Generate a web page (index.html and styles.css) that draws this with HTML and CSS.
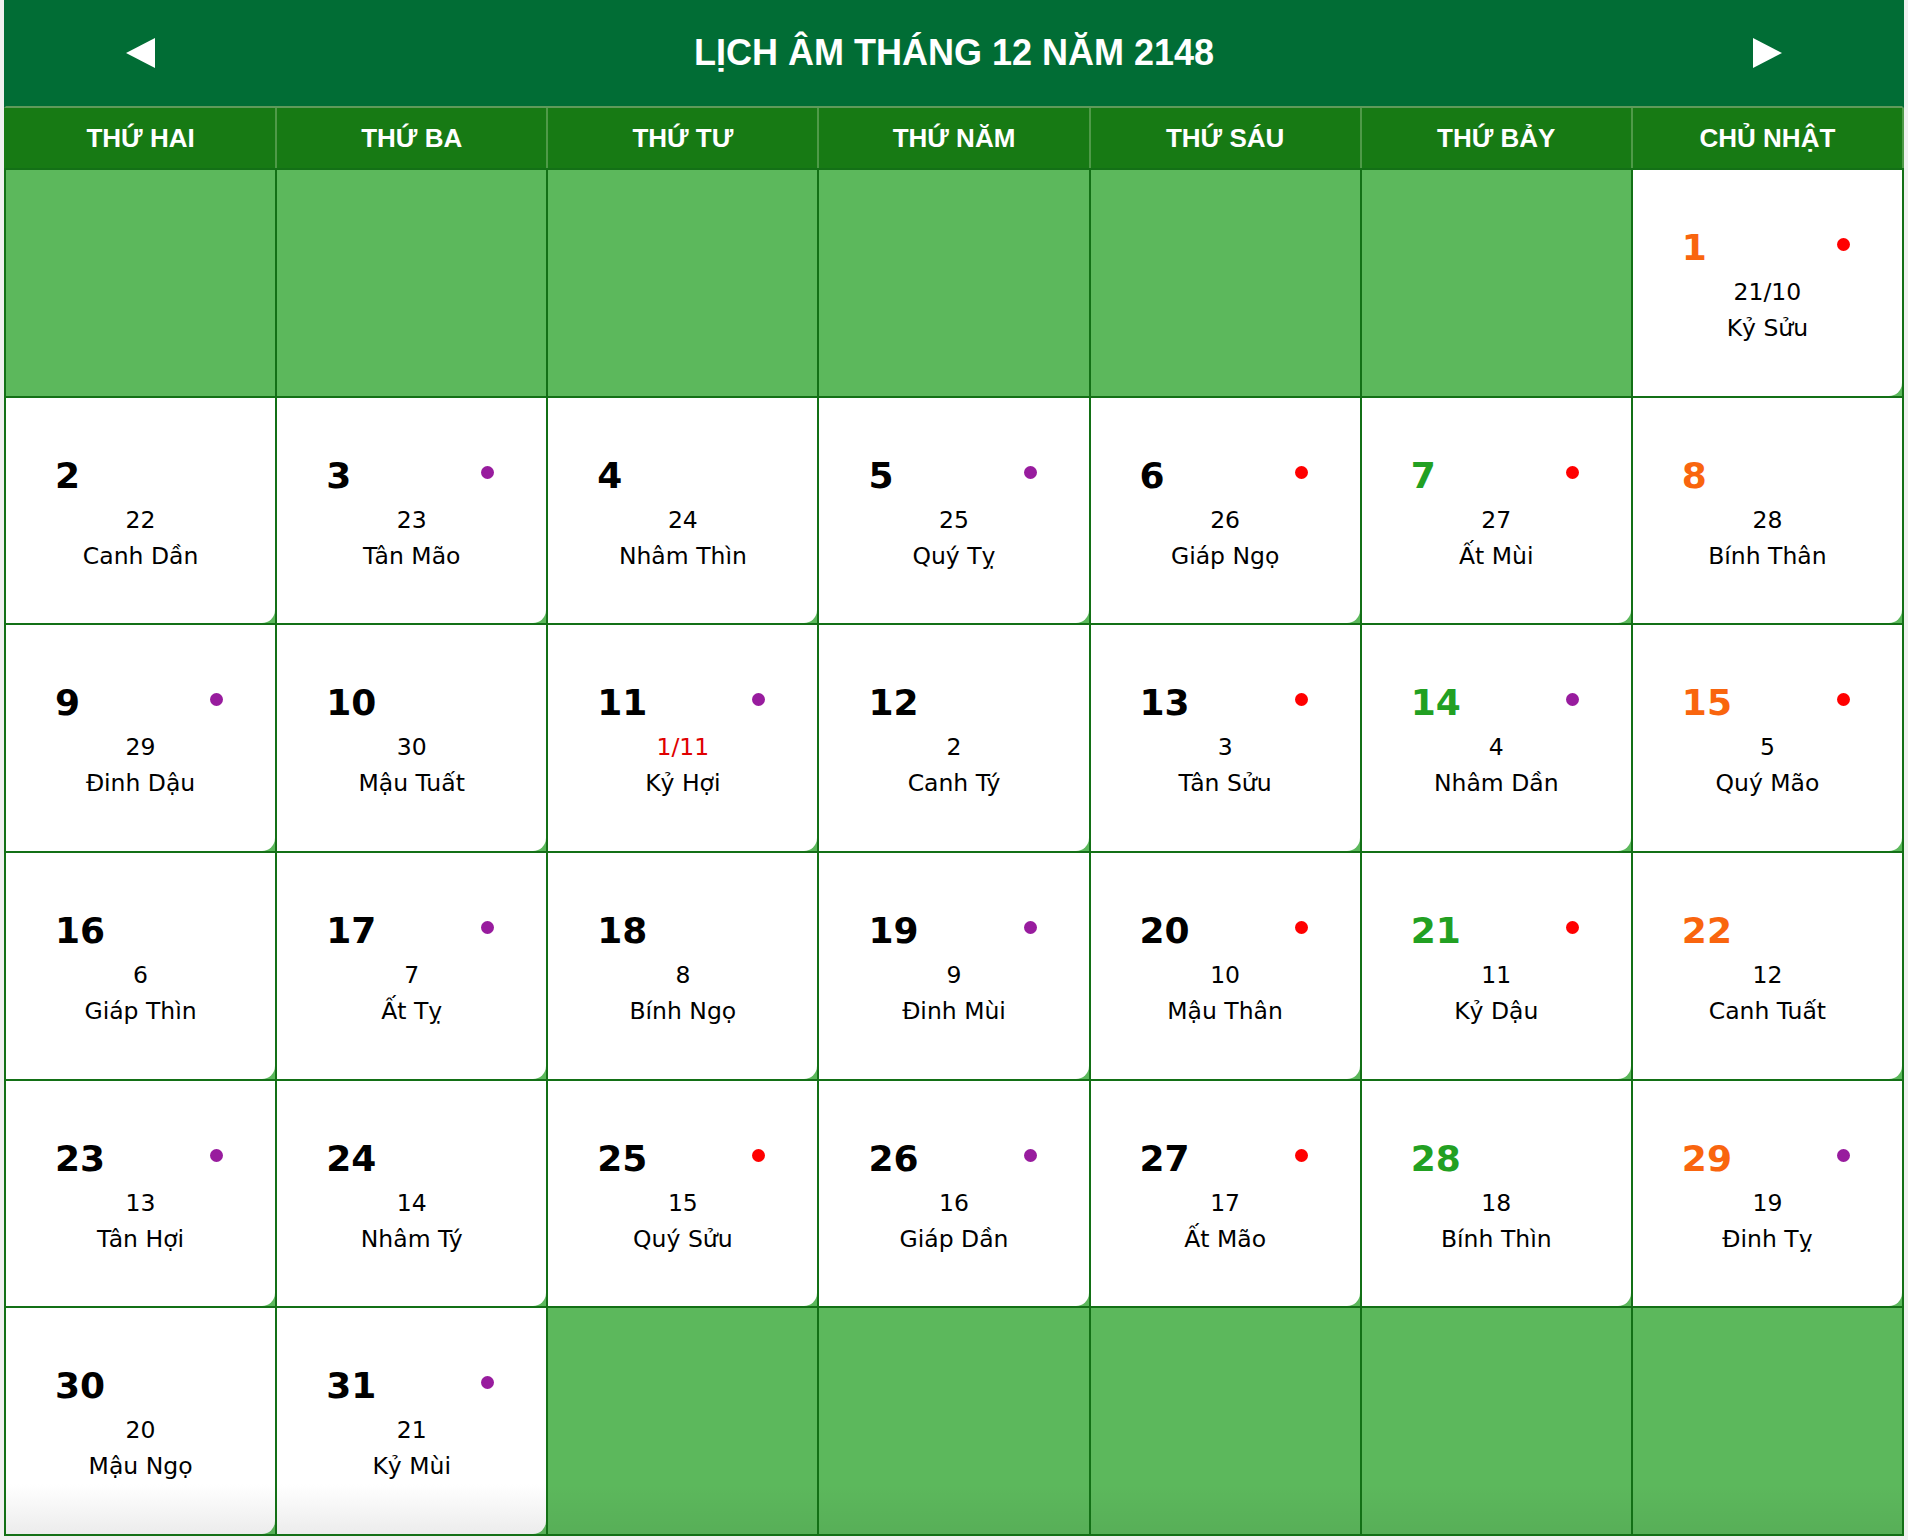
FILE: index.html
```html
<!DOCTYPE html>
<html lang="vi">
<head>
    <meta charset="UTF-8">
    <meta name="viewport" content="width=device-width, initial-scale=1.0">
    <title>Lịch âm tháng 12 năm 2148</title>
    <link rel="stylesheet" href="styles.css">
</head>
<body>
    <div class="calendar">
        <div class="cal-title">
            <a class="nav-btn" href="#" title="Tháng trước">
                <svg width="29" height="30" viewBox="0 0 29 30"><polygon points="0,15 29,0 29,30" fill="#fff"/></svg>
            </a>
            <h1>LỊCH ÂM THÁNG 12 NĂM 2148</h1>
            <a class="nav-btn" href="#" title="Tháng sau">
                <svg width="29" height="30" viewBox="0 0 29 30"><polygon points="29,15 0,0 0,30" fill="#fff"/></svg>
            </a>
        </div>

        <div class="weekdays">
            <div>THỨ HAI</div>
            <div>THỨ BA</div>
            <div>THỨ TƯ</div>
            <div>THỨ NĂM</div>
            <div>THỨ SÁU</div>
            <div>THỨ BẢY</div>
            <div>CHỦ NHẬT</div>
        </div>

        <div class="days">
            <!-- tuần 1 -->
            <div class="cell"></div>
            <div class="cell"></div>
            <div class="cell"></div>
            <div class="cell"></div>
            <div class="cell"></div>
            <div class="cell"></div>
            <div class="cell"><div class="day">
                <div class="day-top"><span class="solar sun">1</span><span class="dot red"></span></div>
                <p class="lunar">21/10</p><p class="canchi">Kỷ Sửu</p>
            </div></div>

            <!-- tuần 2 -->
            <div class="cell"><div class="day">
                <div class="day-top"><span class="solar">2</span></div>
                <p class="lunar">22</p><p class="canchi">Canh Dần</p>
            </div></div>
            <div class="cell"><div class="day">
                <div class="day-top"><span class="solar">3</span><span class="dot purple"></span></div>
                <p class="lunar">23</p><p class="canchi">Tân Mão</p>
            </div></div>
            <div class="cell"><div class="day">
                <div class="day-top"><span class="solar">4</span></div>
                <p class="lunar">24</p><p class="canchi">Nhâm Thìn</p>
            </div></div>
            <div class="cell"><div class="day">
                <div class="day-top"><span class="solar">5</span><span class="dot purple"></span></div>
                <p class="lunar">25</p><p class="canchi">Quý Tỵ</p>
            </div></div>
            <div class="cell"><div class="day">
                <div class="day-top"><span class="solar">6</span><span class="dot red"></span></div>
                <p class="lunar">26</p><p class="canchi">Giáp Ngọ</p>
            </div></div>
            <div class="cell"><div class="day">
                <div class="day-top"><span class="solar sat">7</span><span class="dot red"></span></div>
                <p class="lunar">27</p><p class="canchi">Ất Mùi</p>
            </div></div>
            <div class="cell"><div class="day">
                <div class="day-top"><span class="solar sun">8</span></div>
                <p class="lunar">28</p><p class="canchi">Bính Thân</p>
            </div></div>

            <!-- tuần 3 -->
            <div class="cell"><div class="day">
                <div class="day-top"><span class="solar">9</span><span class="dot purple"></span></div>
                <p class="lunar">29</p><p class="canchi">Đinh Dậu</p>
            </div></div>
            <div class="cell"><div class="day">
                <div class="day-top"><span class="solar">10</span></div>
                <p class="lunar">30</p><p class="canchi">Mậu Tuất</p>
            </div></div>
            <div class="cell"><div class="day">
                <div class="day-top"><span class="solar">11</span><span class="dot purple"></span></div>
                <p class="lunar first">1/11</p><p class="canchi">Kỷ Hợi</p>
            </div></div>
            <div class="cell"><div class="day">
                <div class="day-top"><span class="solar">12</span></div>
                <p class="lunar">2</p><p class="canchi">Canh Tý</p>
            </div></div>
            <div class="cell"><div class="day">
                <div class="day-top"><span class="solar">13</span><span class="dot red"></span></div>
                <p class="lunar">3</p><p class="canchi">Tân Sửu</p>
            </div></div>
            <div class="cell"><div class="day">
                <div class="day-top"><span class="solar sat">14</span><span class="dot purple"></span></div>
                <p class="lunar">4</p><p class="canchi">Nhâm Dần</p>
            </div></div>
            <div class="cell"><div class="day">
                <div class="day-top"><span class="solar sun">15</span><span class="dot red"></span></div>
                <p class="lunar">5</p><p class="canchi">Quý Mão</p>
            </div></div>

            <!-- tuần 4 -->
            <div class="cell"><div class="day">
                <div class="day-top"><span class="solar">16</span></div>
                <p class="lunar">6</p><p class="canchi">Giáp Thìn</p>
            </div></div>
            <div class="cell"><div class="day">
                <div class="day-top"><span class="solar">17</span><span class="dot purple"></span></div>
                <p class="lunar">7</p><p class="canchi">Ất Tỵ</p>
            </div></div>
            <div class="cell"><div class="day">
                <div class="day-top"><span class="solar">18</span></div>
                <p class="lunar">8</p><p class="canchi">Bính Ngọ</p>
            </div></div>
            <div class="cell"><div class="day">
                <div class="day-top"><span class="solar">19</span><span class="dot purple"></span></div>
                <p class="lunar">9</p><p class="canchi">Đinh Mùi</p>
            </div></div>
            <div class="cell"><div class="day">
                <div class="day-top"><span class="solar">20</span><span class="dot red"></span></div>
                <p class="lunar">10</p><p class="canchi">Mậu Thân</p>
            </div></div>
            <div class="cell"><div class="day">
                <div class="day-top"><span class="solar sat">21</span><span class="dot red"></span></div>
                <p class="lunar">11</p><p class="canchi">Kỷ Dậu</p>
            </div></div>
            <div class="cell"><div class="day">
                <div class="day-top"><span class="solar sun">22</span></div>
                <p class="lunar">12</p><p class="canchi">Canh Tuất</p>
            </div></div>

            <!-- tuần 5 -->
            <div class="cell"><div class="day">
                <div class="day-top"><span class="solar">23</span><span class="dot purple"></span></div>
                <p class="lunar">13</p><p class="canchi">Tân Hợi</p>
            </div></div>
            <div class="cell"><div class="day">
                <div class="day-top"><span class="solar">24</span></div>
                <p class="lunar">14</p><p class="canchi">Nhâm Tý</p>
            </div></div>
            <div class="cell"><div class="day">
                <div class="day-top"><span class="solar">25</span><span class="dot red"></span></div>
                <p class="lunar">15</p><p class="canchi">Quý Sửu</p>
            </div></div>
            <div class="cell"><div class="day">
                <div class="day-top"><span class="solar">26</span><span class="dot purple"></span></div>
                <p class="lunar">16</p><p class="canchi">Giáp Dần</p>
            </div></div>
            <div class="cell"><div class="day">
                <div class="day-top"><span class="solar">27</span><span class="dot red"></span></div>
                <p class="lunar">17</p><p class="canchi">Ất Mão</p>
            </div></div>
            <div class="cell"><div class="day">
                <div class="day-top"><span class="solar sat">28</span></div>
                <p class="lunar">18</p><p class="canchi">Bính Thìn</p>
            </div></div>
            <div class="cell"><div class="day">
                <div class="day-top"><span class="solar sun">29</span><span class="dot purple"></span></div>
                <p class="lunar">19</p><p class="canchi">Đinh Tỵ</p>
            </div></div>

            <!-- tuần 6 -->
            <div class="cell"><div class="day">
                <div class="day-top"><span class="solar">30</span></div>
                <p class="lunar">20</p><p class="canchi">Mậu Ngọ</p>
            </div></div>
            <div class="cell"><div class="day">
                <div class="day-top"><span class="solar">31</span><span class="dot purple"></span></div>
                <p class="lunar">21</p><p class="canchi">Kỷ Mùi</p>
            </div></div>
            <div class="cell"></div>
            <div class="cell"></div>
            <div class="cell"></div>
            <div class="cell"></div>
            <div class="cell"></div>
        </div>
    </div>
</body>
</html>
```

FILE: styles.css
```css
body {
    margin: 0;
    background-color: #f0f0f0;
    font-family: "DejaVu Sans", Tahoma, Verdana, sans-serif;
}
.calendar {
    width: 1900px;
    margin: 0 4px;
}
.cal-title {
    display: grid;
    grid-template-columns: repeat(7, 1fr);
    gap: 2px;
    align-items: center;
    height: 106px;
    background-color: #016d35;
    border-left: 2px solid #016d35;
    border-right: 2px solid #016d35;
    border-bottom: 2px solid #5f9a5a;
}
.cal-title h1 {
    grid-column: 2 / 7;
    margin: 0;
    text-align: center;
    color: #fff;
    font-family: "Liberation Sans", Arial, sans-serif;
    font-size: 36px;
    font-weight: bold;
}
.nav-btn {
    display: flex;
    justify-content: center;
    align-items: center;
    height: 106px;
    margin-top: -1px;
}
.nav-btn svg {
    display: block;
}
.weekdays {
    display: grid;
    grid-template-columns: repeat(7, 1fr);
    gap: 2px;
    height: 60px;
    background-color: #4f9a48;
    border-left: 2px solid #177a14;
    border-right: 2px solid #4f9a48;
}
.weekdays div {
    display: flex;
    align-items: center;
    justify-content: center;
    background-color: #177a14;
    color: #fff;
    font-family: "Liberation Sans", Arial, sans-serif;
    font-size: 26px;
    font-weight: bold;
}
.days {
    display: grid;
    grid-template-columns: repeat(7, 1fr);
    grid-template-rows: repeat(6, 1fr);
    gap: 2px;
    height: 1368px;
    box-sizing: border-box;
    background-color: #137016;
    border: 2px solid #137016;
}
.cell {
    background-color: #5cb85c;
    min-width: 0;
}
.day {
    height: 100%;
    box-sizing: border-box;
    padding-top: 56px;
    background-color: #fff;
    border-bottom-right-radius: 13px;
}
.days .cell:nth-child(n+36) {
    background-image: linear-gradient(to bottom, rgba(0, 0, 0, 0) 78%, rgba(0, 0, 0, 0.05));
}
.days .cell:nth-child(n+36) .day {
    background-image: linear-gradient(to bottom, #fff 78%, #ececec);
}
.day-top {
    display: flex;
    justify-content: space-between;
    align-items: center;
    height: 44px;
    padding: 0 52px 0 49px;
}
.solar {
    font-size: 36px;
    font-weight: bold;
    line-height: 44px;
    color: #000;
}
.solar.sat {
    color: #22a022;
}
.solar.sun {
    color: #f9650e;
}
.dot {
    width: 13px;
    height: 13px;
    border-radius: 50%;
    margin-bottom: 7px;
}
.dot.red {
    background-color: #ff0000;
}
.dot.purple {
    background-color: #981c9e;
}
.lunar,
.canchi {
    margin: 0;
    text-align: center;
    font-size: 23.5px;
    line-height: 36px;
    color: #000;
}
.lunar {
    margin-top: 4px;
}
.lunar.first {
    color: #e00000;
}
```
